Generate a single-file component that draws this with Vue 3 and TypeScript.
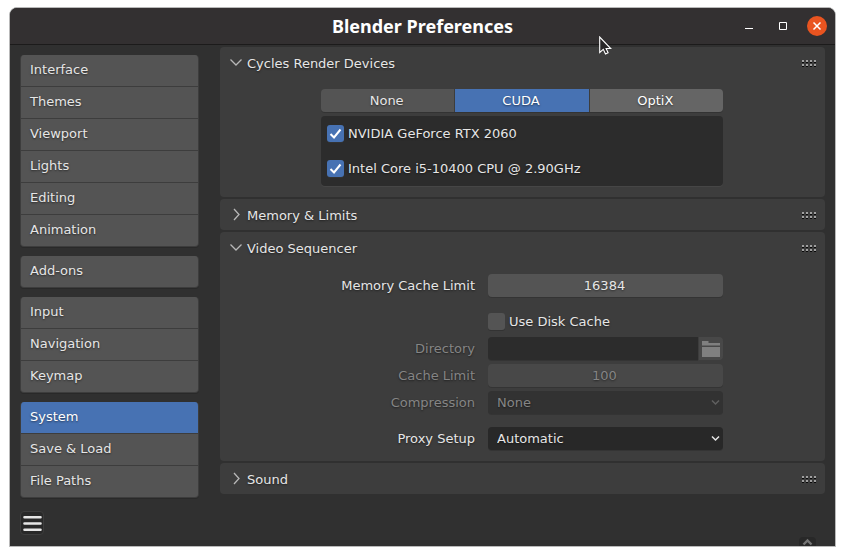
<script setup lang="ts">
import { ref, reactive } from 'vue'

const groups: string[][] = [
  ['Interface', 'Themes', 'Viewport', 'Lights', 'Editing', 'Animation'],
  ['Add-ons'],
  ['Input', 'Navigation', 'Keymap'],
  ['System', 'Save & Load', 'File Paths'],
]
const section = ref('System')

const backends = ['None', 'CUDA', 'OptiX']
const backend = ref('CUDA')
const hovered = ref('OptiX')

const devices = reactive([
  { id: 'gpu', name: 'NVIDIA GeForce RTX 2060', on: true },
  { id: 'cpu', name: 'Intel Core i5-10400 CPU @ 2.90GHz', on: true },
])

interface Panel {
  id: 'cycles' | 'memory' | 'sequencer' | 'sound'
  title: string
  open: boolean
}
const panels = reactive<Panel[]>([
  { id: 'cycles', title: 'Cycles Render Devices', open: true },
  { id: 'memory', title: 'Memory & Limits', open: false },
  { id: 'sequencer', title: 'Video Sequencer', open: true },
  { id: 'sound', title: 'Sound', open: false },
])

const cacheLimit = ref('16384')
const diskCache = ref(false)
const directory = ref('')
const diskLimit = ref('100')
const compression = ref('None')
const proxy = ref('Automatic')
</script>

<template>
  <div class="desktop">
    <div class="window">
      <header class="titlebar">
        <h1>Blender Preferences</h1>
        <div class="controls">
          <button type="button" class="wm" aria-label="Minimize">
            <svg width="20" height="20" viewBox="0 0 20 20"><path d="M6 12.5h8" stroke="#fff" /></svg>
          </button>
          <button type="button" class="wm" aria-label="Maximize">
            <svg width="20" height="20" viewBox="0 0 20 20"><path d="M6.5 6.5h7v7h-7z" fill="none" stroke="#fff" /></svg>
          </button>
          <button type="button" class="wm close" aria-label="Close">
            <svg width="20" height="20" viewBox="0 0 20 20"><path d="M6.5 6.5l7 7M13.5 6.5l-7 7" stroke="#fff" stroke-width="1.5" /></svg>
          </button>
        </div>
      </header>

      <div class="body">
        <aside>
          <nav>
            <div v-for="(group, i) in groups" :key="i" class="group">
              <button
                v-for="item in group"
                :key="item"
                type="button"
                :class="{ active: item === section }"
                @click="section = item"
              >{{ item }}</button>
            </div>
          </nav>
          <button type="button" class="menu" aria-label="Menu">
            <svg width="19" height="17" viewBox="0 0 19 17">
              <path d="M1.5 2.2h16M1.5 8.5h16M1.5 14.8h16" stroke="#e6e6e6" stroke-width="2.6" stroke-linecap="round" />
            </svg>
          </button>
        </aside>

        <main>
          <section v-for="p in panels" :key="p.id" class="panel">
            <button type="button" class="head" :aria-expanded="p.open" @click="p.open = !p.open">
              <svg class="chevron" width="14" height="14" viewBox="0 0 14 14">
                <path :d="p.open ? 'M1.5 3.5l5.5 5.5 5.5-5.5' : 'M5 1l5 5.5-5 5.5'" fill="none" stroke="#b8b8b8" stroke-width="1.3" />
              </svg>
              <span>{{ p.title }}</span>
              <svg class="grip" width="15" height="8" viewBox="0 0 15 8">
                <path d="M0 2h15M0 6h15" stroke="#a0a0a0" stroke-width="2" stroke-dasharray="2 2" />
                <path d="M0 3.5h15M0 7.5h15" stroke="#080808" stroke-dasharray="2 2" />
              </svg>
            </button>

            <div v-if="p.open && p.id === 'cycles'" class="content">
              <div class="tabs">
                <button
                  v-for="b in backends"
                  :key="b"
                  type="button"
                  :class="{ active: b === backend, hover: b === hovered && b !== backend }"
                  @click="backend = b"
                  @mouseenter="hovered = b"
                >{{ b }}</button>
              </div>
              <div class="devices">
                <label v-for="d in devices" :key="d.id" class="check">
                  <input v-model="d.on" type="checkbox" />
                  <svg v-if="d.on" width="17" height="17" viewBox="0 0 17 17">
                    <path d="M3.5 9l3.5 3.5 6.5-8" fill="none" stroke="#fff" stroke-width="2" />
                  </svg>
                  <span>{{ d.name }}</span>
                </label>
              </div>
            </div>

            <div v-if="p.open && p.id === 'sequencer'" class="content form">
              <div class="row">
                <label for="cache">Memory Cache Limit</label>
                <input id="cache" v-model="cacheLimit" class="field number" type="text" />
              </div>
              <div class="row disk">
                <label class="check">
                  <input v-model="diskCache" type="checkbox" />
                  <svg v-if="diskCache" width="17" height="17" viewBox="0 0 17 17">
                    <path d="M3.5 9l3.5 3.5 6.5-8" fill="none" stroke="#fff" stroke-width="2" />
                  </svg>
                  <span>Use Disk Cache</span>
                </label>
              </div>
              <div class="row" :class="{ off: !diskCache }">
                <label for="directory">Directory</label>
                <div class="path">
                  <input id="directory" v-model="directory" class="field" type="text" :disabled="!diskCache" />
                  <button type="button" aria-label="Browse" :disabled="!diskCache">
                    <svg width="18" height="16" viewBox="0 0 18 16">
                      <path d="M0 0h6.5v2H18v2.5H0zM0 6h18v10H0z" fill="#808080" />
                    </svg>
                  </button>
                </div>
              </div>
              <div class="row" :class="{ off: !diskCache }">
                <label for="disk-limit">Cache Limit</label>
                <input id="disk-limit" v-model="diskLimit" class="field number" type="text" :disabled="!diskCache" />
              </div>
              <div class="row" :class="{ off: !diskCache }">
                <label for="compression">Compression</label>
                <div class="select">
                  <select id="compression" v-model="compression" class="field" :disabled="!diskCache">
                    <option>None</option>
                    <option>Low</option>
                    <option>High</option>
                  </select>
                  <svg width="9" height="7" viewBox="0 0 9 7"><path d="M1 1.5l3.5 3.5L8 1.5" fill="none" stroke="currentColor" stroke-width="1.5" /></svg>
                </div>
              </div>
              <div class="row proxy">
                <label for="proxy">Proxy Setup</label>
                <div class="select">
                  <select id="proxy" v-model="proxy" class="field">
                    <option>Automatic</option>
                    <option>Manual</option>
                  </select>
                  <svg width="9" height="7" viewBox="0 0 9 7"><path d="M1 1.5l3.5 3.5L8 1.5" fill="none" stroke="currentColor" stroke-width="1.5" /></svg>
                </div>
              </div>
            </div>
          </section>
        </main>
      </div>

      <button type="button" class="expand" aria-label="Show region">
        <svg width="11" height="8" viewBox="0 0 11 8"><path d="M1.5 6.5l4-4 4 4" fill="none" stroke="#757575" stroke-width="2.4" /></svg>
      </button>
      <svg class="pointer" width="14" height="20" viewBox="0 0 14 20">
        <path d="M.7 1v15.5l3.6-3.2 2.2 4.6 2.6-1.2-2-4.2h4.6z" fill="#292728" stroke="#fff" stroke-width="1.1" />
      </svg>
    </div>
  </div>
</template>

<style>
body {
  background: #fff;
}
</style>

<style scoped>
* {
  box-sizing: border-box;
}

.desktop {
  display: flex;
  min-height: 100vh;
  padding: 7px 9px 9px;
  font: 13px/16px "DejaVu Sans", sans-serif;
  color: #e6e6e6;
}

button,
input,
select {
  margin: 0;
  padding: 0;
  border: 0;
  font: inherit;
  color: inherit;
  text-shadow: inherit;
}

button {
  background: none;
}

svg {
  display: block;
  flex: none;
}

.window {
  position: relative;
  display: flex;
  flex: 1;
  flex-direction: column;
  overflow: hidden;
  border: 1px solid #b9b9b9;
  border-radius: 8px 8px 0 0;
  background: #303030;
  text-shadow: 0 1px 2px rgba(0, 0, 0, 0.5);
}

.titlebar {
  display: grid;
  grid-template-columns: 1fr auto 1fr;
  align-items: center;
  height: 37px;
  padding: 0 8px;
  border-bottom: 1px solid #1c1b1b;
  background: #333031;
  text-shadow: none;
}

h1 {
  grid-column: 2;
  margin: 0;
  font: bold 18px/24px "Noto Sans", sans-serif;
  color: #fff;
}

.controls {
  display: flex;
  justify-content: flex-end;
  gap: 14px;
}

.wm {
  width: 20px;
  height: 20px;
}

.close {
  border-radius: 50%;
  background: #e95420;
}

.body {
  display: grid;
  flex: 1;
  grid-template-columns: 179px 1fr;
  gap: 21px;
  padding: 2px 10px 10px;
}

aside {
  padding-top: 8px;
}

nav {
  display: grid;
  gap: 9px;
}

.group {
  display: grid;
  gap: 1px;
  overflow: hidden;
  border: 1px solid #3d3d3d;
  border-top: 0;
  border-radius: 4px;
  background: #3d3d3d;
  box-shadow: 0 1px 0 #292929;
}

.group button {
  height: 31px;
  padding: 0 9px 1px;
  background: #545454;
  text-align: left;
}

.group .active {
  background: #4772b3;
  color: #fff;
}

.menu {
  display: grid;
  place-items: center;
  width: 24px;
  height: 24px;
  margin-top: 13px;
  border: 1px solid #3d3d3d;
  border-radius: 4px;
  background: #282828;
}

main {
  display: flex;
  flex-direction: column;
  gap: 2px;
}

.panel {
  border-radius: 4px;
  background: #3d3d3d;
}

.head {
  display: flex;
  align-items: center;
  gap: 4px;
  width: 100%;
  height: 31px;
  padding: 2px 8px 0 9px;
  text-align: left;
}

.chevron,
.grip {
  margin-bottom: 2px;
}

.grip {
  margin-left: auto;
}

.content {
  max-width: 403px;
  margin: 0 auto;
  padding: 11px 1px 11px 0;
}

.tabs {
  display: grid;
  grid-template-columns: repeat(3, 1fr);
  gap: 1px;
  overflow: hidden;
  border-radius: 4px;
  box-shadow: 0 1px 0 #333;
}

.tabs button {
  height: 23px;
  padding-right: 2px;
  background: #545454;
}

.tabs .active {
  background: #4772b3;
  color: #fff;
}

.tabs .hover {
  background: #656565;
  color: #fff;
}

.devices {
  display: grid;
  gap: 18px;
  margin-top: 4px;
  padding: 9px 6px;
  border-radius: 4px;
  background: #2c2c2c;
  box-shadow: 0 1px 0 #464646;
}

.check {
  display: grid;
  grid-template-columns: 17px auto;
  align-items: center;
  justify-content: start;
  gap: 4px;
  height: 17px;
}

.check input,
.check svg {
  grid-area: 1 / 1;
}

.check svg {
  pointer-events: none;
}

.check input {
  width: 17px;
  height: 17px;
  appearance: none;
  border-radius: 3px;
  background: #545454;
  box-shadow: 0 1px 0 #333;
}

.check input:checked {
  background: #4772b3;
}

.form {
  display: grid;
  gap: 4px;
}

.row {
  display: grid;
  grid-template-columns: 154fr 235fr;
  align-items: center;
  gap: 13px;
}

.row > label:first-child {
  text-align: right;
}

.disk {
  margin: 12px 0 3px;
}

.disk > .check {
  grid-column: 2;
}

.proxy {
  margin-top: 9px;
}

.field {
  width: 100%;
  min-width: 0;
  height: 23px;
  border-radius: 4px;
  background: #282828;
  box-shadow: 0 1px 0 #343434;
}

.number {
  padding-right: 2px;
  background: #545454;
  text-align: center;
}

.select {
  display: grid;
  align-items: center;
}

.select > * {
  grid-area: 1 / 1;
}

.select svg {
  justify-self: end;
  margin-right: 3px;
  pointer-events: none;
}

select {
  appearance: none;
  padding: 0 9px;
}

.off {
  color: #858585;
}

.off .field {
  opacity: 1;
  background: #323232;
}

.off .number {
  background: #484848;
}

.off .select svg {
  color: #606060;
}

.path {
  display: grid;
  grid-template-columns: 1fr 24px;
  gap: 1px;
}

.off .path .field {
  border-radius: 4px 0 0 4px;
  background: #2c2c2c;
}

.path button {
  display: grid;
  place-items: center;
  border-radius: 0 4px 4px 0;
  background: #484848;
}

.expand {
  position: absolute;
  right: 19px;
  bottom: 0;
  display: grid;
  place-items: center;
  width: 17px;
  height: 9px;
  border-radius: 4px 4px 0 0;
  background: #282828;
}

.pointer {
  position: absolute;
  top: 28px;
  left: 589px;
  pointer-events: none;
}
</style>
